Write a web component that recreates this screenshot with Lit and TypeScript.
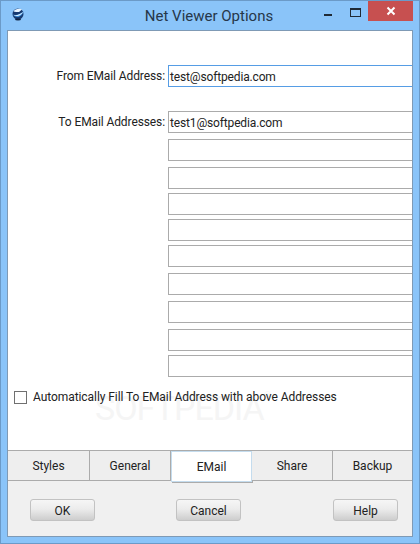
import { LitElement, html, css } from "lit";
import { customElement } from "lit/decorators.js";

const GAPS = [0, 6, 6, 4, 4, 4, 6, 6, 6, 4];

@customElement("app-root")
export class AppRoot extends LitElement {
  static styles = css`
    :host { display: block; width: 420px; height: 544px; font-family: Roboto, "Liberation Sans", sans-serif; color: #222; }
    .win { box-sizing: border-box; width: 420px; height: 544px; background: #8ac4f9; border: 1px solid #6b9ac8; display: flex; flex-direction: column; padding: 0 6px 6px 6px; }
    .title { height: 29px; flex: none; position: relative; }
    .logo { position: absolute; left: 4px; top: 6px; width: 14px; height: 14px; }
    .caption { text-align: center; font-size: 15px; line-height: 31px; color: #26374a; padding-right: 2px; }
    .ctrls { position: absolute; left: 317px; top: 0; display: flex; align-items: flex-start; }
    .min { width: 8px; height: 2px; margin-top: 13px; background: #1f2a36; }
    .max { box-sizing: border-box; width: 11px; height: 9px; margin: 7px 0 0 18px; border: 1px solid #1f2a36; border-top-width: 2px; }
    .close { width: 45px; height: 20px; margin-left: 7px; background: #c75050; display: flex; align-items: center; justify-content: center; }
    .client { flex: 1; display: flex; flex-direction: column; border: 1px solid #7f9ab5; background: #f0f0f0; min-height: 0; }
    .panel { flex: 1; min-height: 0; background: #fff; padding-top: 34px; position: relative; overflow: hidden; }
    .wm { position: absolute; left: 87px; top: 349px; font-size: 34px; line-height: 34px; letter-spacing: -1px; color: #f5f5f5; white-space: nowrap; }
    .wm span { font-size: 10px; vertical-align: 20px; }
    .row { position: relative; display: grid; grid-template-columns: 157px 1fr; column-gap: 3px; row-gap: 24px; }
    .lbl { font-size: 12px; letter-spacing: -0.1px; text-align: right; line-height: 22px; }
    .field { box-sizing: border-box; height: 22px; border: 1px solid #ababab; border-right: 0; font-size: 12px; letter-spacing: -0.15px; line-height: 22px; padding-left: 1px; background: #fff; }
    .focus { border-color: #569de5; }
    .check { position: relative; display: flex; align-items: center; gap: 6px; margin: 13px 0 0 6px; font-size: 12px; letter-spacing: -0.07px; line-height: 14px; }
    .box { box-sizing: border-box; width: 13px; height: 13px; border: 1px solid #707070; background: #fff; }
    .tabs { display: grid; grid-template-columns: 82px 81px 81px 81px 1fr; height: 31px; flex: none; border-top: 1px solid #ababab; border-bottom: 1px solid #ababab; box-sizing: border-box; }
    .tab { display: flex; align-items: center; justify-content: center; font-size: 12px; border-right: 1px solid #ababab; background: #eee; }
    .tab:last-child { border-right: 0; }
    .tab.on { background: #fff; border: 1px solid #c4dcee; box-shadow: 1px 1px 0 #ababab; margin: 0 0 -2px 0; }
    .foot { display: flex; flex: none; height: 55px; box-sizing: border-box; padding: 18px 0 0 22px; }
    .btn { box-sizing: border-box; width: 65px; height: 22px; padding-top: 1px; border: 1px solid #c2c2c2; border-radius: 3px; background: linear-gradient(#f6f6f6, #ececec 45%, #cdcdcd); font-size: 12px; display: flex; align-items: center; justify-content: center; }
    .b2 { margin-left: 81px; }
    .b3 { margin-left: 92px; }
  `;

  render() {
    return html`<div class="win">
      <div class="title">
        <svg class="logo" viewBox="0 0 14 14">
          <circle cx="7" cy="7" r="5.500" fill="#17396f"/>
          <path d="M2.500 4.500C4 2 8 1 11 2.500L8 5C6 5 4 5 2.500 4.500z" fill="#e8f4ff"/>
          <path d="M1.800 7.500c3 1 7 0 10.500-3-.5 3-3 5.500-6 5.500-2 0-3.500-1-4.500-2.500z" fill="#3d8fd8"/>
          <path d="M3 8c3 .5 6-.5 9-3-1 2-3 3.500-5 4-2 .2-3-.2-4-1z" fill="#dff0ff"/>
          <ellipse cx="7" cy="12.500" rx="3" ry="1" fill="#10233f"/>
        </svg>
        <div class="caption">Net Viewer Options</div>
        <div class="ctrls">
          <div class="min"></div>
          <div class="max"></div>
          <div class="close"><svg width="10" height="10" viewBox="0 0 10 10"><path d="M1.500 1.500l7 7M8.500 1.500l-7 7" stroke="#fff" stroke-width="2"/></svg></div>
        </div>
      </div>
      <div class="client">
        <div class="panel">
          <div class="wm">SOFTPEDIA<span>®</span></div>
          <div class="row">
            <div class="lbl">From EMail Address:</div>
            <div class="field focus">test@softpedia.com</div>
            <div class="lbl">To EMail Addresses:</div>
            <div>
              ${GAPS.map((g, i) => html`<div class="field" style="margin-top:${g}px">${i === 0 ? "test1@softpedia.com" : ""}</div>`)}
            </div>
          </div>
          <div class="check"><span class="box"></span><span>Automatically Fill To EMail Address with above Addresses</span></div>
        </div>
        <div class="tabs">
          <div class="tab">Styles</div>
          <div class="tab">General</div>
          <div class="tab on">EMail</div>
          <div class="tab">Share</div>
          <div class="tab">Backup</div>
        </div>
        <div class="foot">
          <div class="btn">OK</div>
          <div class="btn b2">Cancel</div>
          <div class="btn b3">Help</div>
        </div>
      </div>
    </div>`;
  }
}
